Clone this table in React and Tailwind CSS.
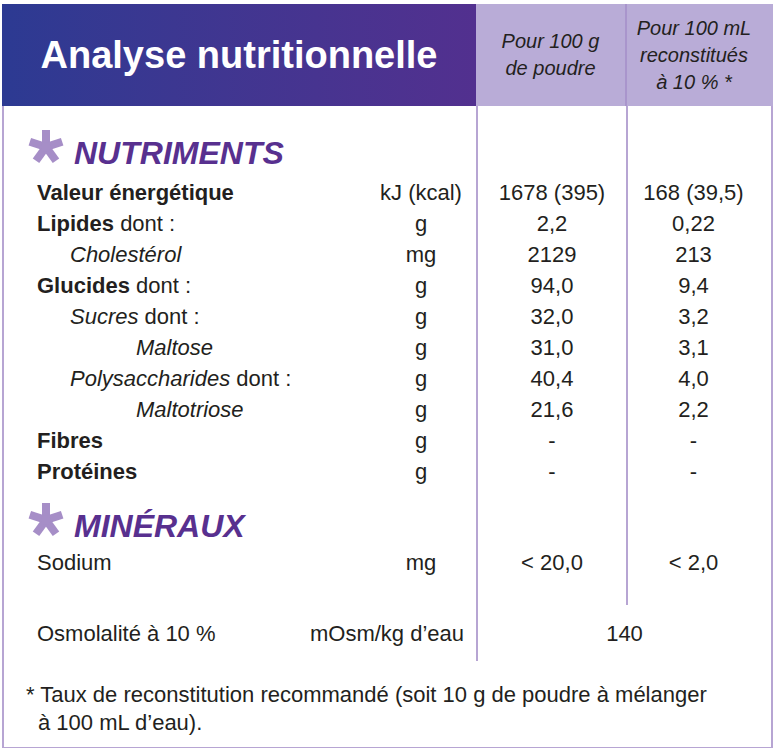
import React from "react";

const font = { fontFamily: '"Liberation Sans", Arial, sans-serif' };

function Star() {
    return (
        <svg width="36" height="34" viewBox="-18 -17 36 34" className="mb-[13px] shrink-0">
            {[0, 72, 144, 216, 288].map((a) => (
                <rect
                    key={a}
                    x="-4"
                    y="-17"
                    width="8"
                    height="17"
                    fill="#a68ec7"
                    transform={`rotate(${a})`}
                />
            ))}
            <circle r="5" fill="#a68ec7" />
        </svg>
    );
}

const rows = [
    { label: "Valeur énergétique", bold: true, unit: "kJ (kcal)", a: "1678 (395)", b: "168 (39,5)" },
    { label: "Lipides", rest: " dont :", bold: true, unit: "g", a: "2,2", b: "0,22" },
    { label: "Cholestérol", italic: true, indent: 1, unit: "mg", a: "2129", b: "213" },
    { label: "Glucides", rest: " dont :", bold: true, unit: "g", a: "94,0", b: "9,4" },
    { label: "Sucres", rest: " dont :", italic: true, indent: 1, unit: "g", a: "32,0", b: "3,2" },
    { label: "Maltose", italic: true, indent: 2, unit: "g", a: "31,0", b: "3,1" },
    { label: "Polysaccharides", rest: " dont :", italic: true, indent: 1, unit: "g", a: "40,4", b: "4,0" },
    { label: "Maltotriose", italic: true, indent: 2, unit: "g", a: "21,6", b: "2,2" },
    { label: "Fibres", bold: true, unit: "g", a: "-", b: "-" },
    { label: "Protéines", bold: true, unit: "g", a: "-", b: "-" },
];

function Row({ r }) {
    const pad = r.indent === 2 ? "pl-[132px]" : r.indent === 1 ? "pl-[66px]" : "pl-[33px]";
    return (
        <>
            <div className={`h-[31px] flex items-center ${pad}`}>
                <span className={r.bold ? "font-bold" : r.italic ? "italic" : ""}>{r.label}</span>
                {r.rest && <span className="whitespace-pre">{r.rest}</span>}
            </div>
            <div className="h-[31px] flex items-center justify-center">{r.unit}</div>
            <div className="h-[31px] flex items-center justify-center border-l-2 border-[#b7a5d3]">{r.a}</div>
            <div className="h-[31px] flex items-center justify-center border-l-2 border-[#b7a5d3] pr-3">{r.b}</div>
        </>
    );
}

function Heading({ text }) {
    return (
        <>
            <div className="h-[42px] flex items-center gap-[10px] pl-[24px]">
                <Star />
                <span className="italic font-bold text-[32px] text-[#58308f]">{text}</span>
            </div>
            <div />
            <div className="border-l-2 border-[#b7a5d3]" />
            <div className="border-l-2 border-[#b7a5d3]" />
        </>
    );
}

function Spacer({ h }) {
    return (
        <>
            <div className={h} />
            <div />
            <div className="border-l-2 border-[#b7a5d3]" />
            <div className="border-l-2 border-[#b7a5d3]" />
        </>
    );
}

export default function App() {
    return (
        <div className="w-[775px] h-[748px] bg-white pt-[4px] pl-[2px] text-[#231f20]" style={font}>
            <header className="flex w-[771px] h-[102px]">
                <div className="w-[474px] flex items-center justify-center bg-gradient-to-r from-[#2c3a92] to-[#52308f]">
                    <h1 className="text-white font-bold text-[38px] leading-none">Analyse nutritionnelle</h1>
                </div>
                <div className="w-[149px] flex items-center justify-center bg-[#b9acd7] italic text-[20px] leading-[27px] text-center">
                    <p>
                        Pour 100 g
                        <br />
                        de poudre
                    </p>
                </div>
                <div className="w-[148px] flex items-center justify-center bg-[#b9acd7] border-l-2 border-[#a995cc] italic text-[20px] leading-[27px] text-center pr-3">
                    <p>
                        Pour 100 mL
                        <br />
                        reconstitués
                        <br />à 10 % *
                    </p>
                </div>
            </header>

            <main className="w-[771px] border-x-2 border-b-2 border-[#b7a5d3] text-[22px]">
                <div className="grid grid-cols-[362px_110px_150px_145px]">
                    <Spacer h="h-[26px]" />
                    <Heading text="NUTRIMENTS" />
                    <Spacer h="h-[3px]" />
                    {rows.map((r) => (
                        <Row key={r.label} r={r} />
                    ))}
                    <Spacer h="h-[18px]" />
                    <Heading text="MINÉRAUX" />
                    <Row r={{ label: "Sodium", unit: "mg", a: "< 20,0", b: "< 2,0" }} />
                    <Spacer h="h-[27px]" />
                </div>

                <div className="grid grid-cols-[472px_295px] h-[56px]">
                    <div className="flex items-center justify-between pl-[33px] pr-[12px]">
                        <span>Osmolalité à 10 %</span>
                        <span>mOsm/kg d’eau</span>
                    </div>
                    <div className="flex items-center justify-center border-l-2 border-[#b7a5d3]">140</div>
                </div>

                <footer className="pt-[20px] pb-[10px] pl-[34px] pr-2 leading-[28px] text-[22px]">
                    <p className="-indent-[12px] whitespace-nowrap">
                        * Taux de reconstitution recommandé (soit 10 g de poudre à mélanger
                        <br />
                        à 100 mL d’eau).
                    </p>
                </footer>
            </main>
        </div>
    );
}
